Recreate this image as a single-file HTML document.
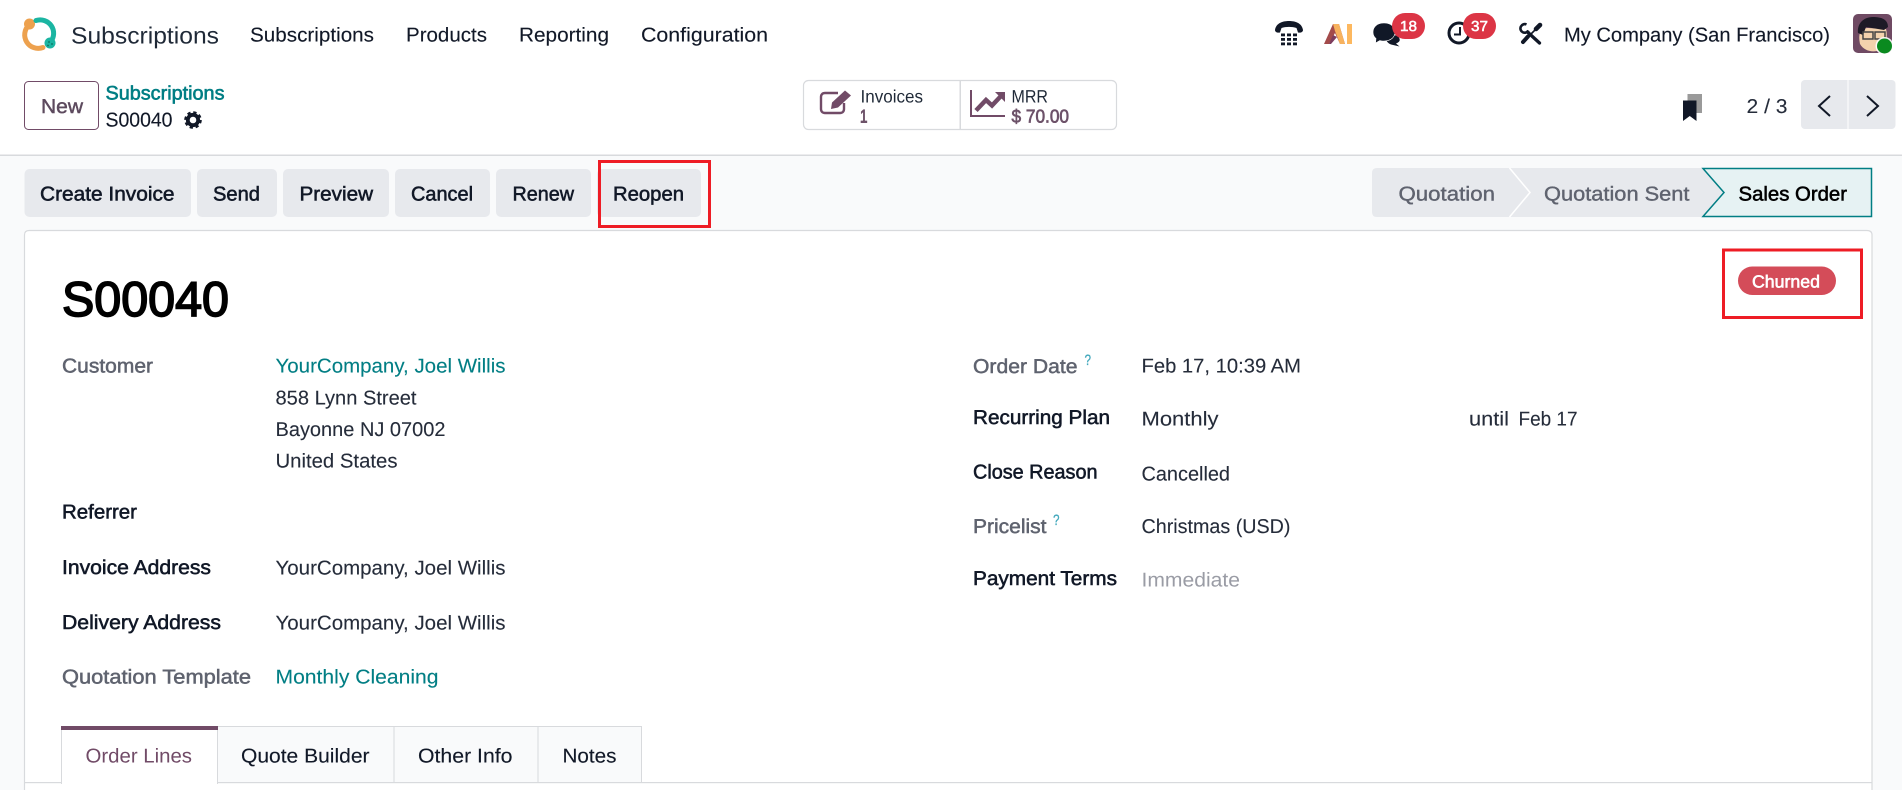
<!DOCTYPE html>
<html lang="en"><head><meta charset="utf-8"><title>S00040 - Subscriptions</title>
<style>
html,body{margin:0;padding:0;width:1902px;height:790px;overflow:hidden;background:#fff}
svg{display:block}
text{font-family:"Liberation Sans",sans-serif;font-size:20px;fill:#1f2937;text-rendering:geometricPrecision}
.d{fill:#111827;stroke:#111827;stroke-width:.12}
.m{stroke:#111827;stroke-width:.55;fill:#111827}
.g{fill:#5f636f;stroke:#5f636f;stroke-width:.5}
.v{fill:#252c3a;stroke:#252c3a;stroke-width:.1}
.l{fill:#017e84;stroke:#017e84;stroke-width:.1}
.p{fill:#714b67}
.q{fill:#45a9bd;font-size:15px;stroke:#45a9bd;stroke-width:.3}
.b{fill:#e7e9ed}
</style></head><body>
<svg width="1902" height="790" viewBox="0 0 1902 790" xmlns="http://www.w3.org/2000/svg">
<rect x="0" y="0" width="1902" height="790" fill="#fff"/>
<rect x="0" y="155" width="1902" height="635" fill="#f9fafb"/>
<rect x="0" y="154.5" width="1902" height="1.5" fill="#d8dadd"/>

<!-- brand -->
<path d="M29 25A13.500 13.500 0 0 0 43 47.500" fill="none" stroke="#eda14e" stroke-width="5" stroke-linecap="round"/>
<circle cx="29.500" cy="24" r="5.500" fill="#eda14e"/>
<path d="M36 20.500A13.500 13.500 0 0 1 50.500 42" fill="none" stroke="#1bb5a2" stroke-width="5" stroke-linecap="round"/>
<circle cx="50" cy="43" r="5.500" fill="#1bb5a2"/>
<circle cx="49" cy="42" r=".9" fill="#0a6f60"/><circle cx="52" cy="44" r=".9" fill="#0a6f60"/><circle cx="48" cy="45.500" r=".9" fill="#0a6f60"/>
<text x="71" y="43.500" style="font-size:23.500px;fill:#1f2937" textLength="148" lengthAdjust="spacingAndGlyphs">Subscriptions</text>
<text class="d" x="250" y="41.500" textLength="124" lengthAdjust="spacingAndGlyphs">Subscriptions</text>
<text class="d" x="406" y="41.500" textLength="81" lengthAdjust="spacingAndGlyphs">Products</text>
<text class="d" x="519" y="41.500" textLength="90" lengthAdjust="spacingAndGlyphs">Reporting</text>
<text class="d" x="641" y="41.500" textLength="127" lengthAdjust="spacingAndGlyphs">Configuration</text>

<!-- systray -->
<g fill="#111827">
<path d="M1275 30C1276 23 1283 21 1289 21C1295 21 1302 23 1303 30C1303 32 1301 33 1298 32.500L1296.500 28C1292 26.500 1286 26.500 1281.500 28L1280 32.500C1277 33 1275 32 1275 30Z"/>
<rect x="1281" y="33.500" width="4" height="2.800"/><rect x="1287" y="33.500" width="4" height="2.800"/><rect x="1293" y="33.500" width="4" height="2.800"/>
<rect x="1281" y="38" width="4" height="2.800"/><rect x="1287" y="38" width="4" height="2.800"/><rect x="1293" y="38" width="4" height="2.800"/>
<rect x="1281" y="42.500" width="4" height="2.800"/><rect x="1287" y="42.500" width="4" height="2.800"/><rect x="1293" y="42.500" width="4" height="2.800"/>
</g>
<path d="M1324 44L1333 24H1339L1345 44H1340L1335 33L1329 44Z" fill="#a34b4b"/>
<path d="M1333 24H1339L1345 44H1340L1335 31Z" fill="#f7b25e"/>
<path d="M1329 44L1333 35L1337 37L1331 44Z" fill="#7d3d5e"/>
<rect x="1347" y="24" width="5" height="20" fill="#fdb85f"/>
<path d="M1386 33L1398 36C1401 40 1400 42 1396 43.500L1399.500 46.500L1391 44.500C1387 43 1386 40 1386 38Z" fill="#111827"/>
<path d="M1384 23C1391 23 1395 27 1395 32C1395 37 1391 41 1384 41C1382 41 1381 41 1380 40.500L1375.500 43L1376 38.500C1374 37 1373 34.500 1373 32C1373 27 1377 23 1384 23Z" fill="#111827" stroke="#fff" stroke-width=".6"/>
<rect x="1392" y="13" width="33" height="26" rx="13" fill="#dc3545"/>
<text x="1400" y="31" textLength="17" lengthAdjust="spacingAndGlyphs" style="font-size:14.500px;fill:#fff;stroke:#fff;stroke-width:.5">18</text>
<circle cx="1459" cy="33" r="10" fill="none" stroke="#111827" stroke-width="3"/>
<path d="M1460 27V34.500H1454" fill="none" stroke="#111827" stroke-width="2"/>
<rect x="1463" y="13" width="33" height="26" rx="13" fill="#dc3545"/>
<text x="1471" y="31" textLength="17" lengthAdjust="spacingAndGlyphs" style="font-size:14.500px;fill:#fff;stroke:#fff;stroke-width:.5">37</text>
<!-- tools -->
<g fill="none" stroke="#111827" stroke-linecap="round">
<path d="M1526.500 24.500A4.300 4.300 0 1 0 1528.500 30.500" stroke-width="2.600" stroke-linecap="butt"/>
<path d="M1527.500 32L1539.500 43" stroke-width="3.300"/>
<path d="M1540 25L1536 29" stroke-width="4.600"/>
<path d="M1535 30L1531.500 33.500" stroke-width="1.600"/>
<path d="M1528 36.500L1523 42" stroke-width="4"/>
</g>
<text class="d" x="1564" y="41.500" textLength="266" lengthAdjust="spacingAndGlyphs">My Company (San Francisco)</text>
<!-- avatar -->
<rect x="1853" y="14" width="39" height="39" rx="5" fill="#6f4a63"/>
<path d="M1860 44C1858 34 1860 28 1868 28L1886 29C1888 36 1886 46 1880 50C1873 53 1864 51 1860 44Z" fill="#f3d2ad"/>
<path d="M1858 33C1857 24 1863 17 1873 17C1881 17 1888 19 1888 27L1884 30L1866 27L1863 35Z" fill="#1d1a26"/>
<rect x="1863" y="32" width="10" height="7" fill="none" stroke="#444" stroke-width="1.500"/>
<rect x="1875" y="32" width="10" height="7" fill="none" stroke="#444" stroke-width="1.500"/>
<circle cx="1884.500" cy="46" r="9" fill="#fff" opacity=".9"/>
<circle cx="1884.500" cy="46" r="7.500" fill="#0a8a1f"/>

<!-- control row -->
<rect x="24.500" y="81.500" width="74" height="48" rx="4" fill="#fff" stroke="#714b67"/>
<text x="41" y="113" textLength="42" lengthAdjust="spacingAndGlyphs" style="fill:#5d4a5e;stroke:#5d4a5e;stroke-width:.45">New</text>
<text x="105.500" y="99.500" textLength="119" lengthAdjust="spacingAndGlyphs" style="fill:#017e84;stroke:#017e84;stroke-width:.6;font-size:19.500px">Subscriptions</text>
<text class="d" x="105.500" y="126.500" textLength="67" lengthAdjust="spacingAndGlyphs">S00040</text>
<g transform="translate(193 120)"><circle r="5.200" fill="none" stroke="#111827" stroke-width="3.800"/><circle r="7.700" fill="none" stroke="#111827" stroke-width="2.200" stroke-dasharray="3.300 2.750"/></g>

<!-- stat buttons -->
<rect x="803.500" y="80.500" width="313" height="49" rx="5" fill="#fff" stroke="#d8dadd" stroke-width="1.200"/>
<rect x="959.500" y="81" width="1.500" height="48" fill="#d8dadd"/>
<path d="M838 93H825C822.500 93 821 94.500 821 97V109C821 111.500 822.500 113 825 113H840C842.500 113 844 111.500 844 109V103" fill="none" stroke="#714b67" stroke-width="2.400"/>
<path d="M832 102.500L845 90.500L851 95.500L838 107.500L831 109Z" fill="#714b67"/>
<text x="860.500" y="102.500" style="font-size:18px;fill:#1f2937" textLength="62.500" lengthAdjust="spacingAndGlyphs">Invoices</text>
<text x="860" y="122.500" style="font-size:18.500px;fill:#6d5269;stroke:#6d5269;stroke-width:.9" textLength="7.500" lengthAdjust="spacingAndGlyphs">1</text>
<path d="M971 90V116H1005" fill="none" stroke="#714b67" stroke-width="2"/>
<path d="M976 110.500L986 100L992 105.500L1001 96" fill="none" stroke="#714b67" stroke-width="4.500"/>
<path d="M995 92H1005V102Z" fill="#714b67"/>
<text x="1011.500" y="102.500" style="font-size:18px;fill:#1f2937" textLength="36.500" lengthAdjust="spacingAndGlyphs">MRR</text>
<text x="1011.500" y="122.500" style="font-size:18.500px;fill:#6d5269;stroke:#6d5269;stroke-width:.7" textLength="57.500" lengthAdjust="spacingAndGlyphs">$ 70.00</text>

<!-- bookmark + pager -->
<rect x="1687.500" y="94" width="14.500" height="19" fill="#9a9a9a"/>
<path d="M1683 100.500H1696.500V121L1689.750 116L1683 121Z" fill="#111827"/>
<text class="v" x="1746.500" y="113" textLength="41" lengthAdjust="spacingAndGlyphs">2 / 3</text>
<rect x="1801" y="80" width="94.500" height="49" rx="4" class="b"/>
<rect x="1847.500" y="80" width="1" height="49" fill="#fff"/>
<path d="M1830 96L1819 106L1830 116" fill="none" stroke="#111827" stroke-width="2"/>
<path d="M1867 96L1878 106L1867 116" fill="none" stroke="#111827" stroke-width="2"/>

<!-- action buttons -->
<rect x="24.500" y="169" width="166.500" height="48" rx="5" class="b"/>
<rect x="197" y="169" width="80" height="48" rx="5" class="b"/>
<rect x="283" y="169" width="106" height="48" rx="5" class="b"/>
<rect x="395" y="169" width="95" height="48" rx="5" class="b"/>
<rect x="496" y="169" width="95" height="48" rx="5" class="b"/>
<rect x="597" y="169" width="104" height="48" rx="5" class="b"/>
<text class="m" x="40" y="200.500" textLength="134.500" lengthAdjust="spacingAndGlyphs">Create Invoice</text>
<text class="m" x="213" y="200.500" textLength="47" lengthAdjust="spacingAndGlyphs">Send</text>
<text class="m" x="299.500" y="200.500" textLength="73.500" lengthAdjust="spacingAndGlyphs">Preview</text>
<text class="m" x="411" y="200.500" textLength="62" lengthAdjust="spacingAndGlyphs">Cancel</text>
<text class="m" x="512.500" y="200.500" textLength="61.500" lengthAdjust="spacingAndGlyphs">Renew</text>
<text class="m" x="613" y="200.500" textLength="71" lengthAdjust="spacingAndGlyphs">Reopen</text>
<rect x="599.500" y="161.500" width="110" height="65" fill="none" stroke="#ee1c25" stroke-width="3"/>

<!-- statusbar -->
<path d="M1377 168H1510L1530.500 192.500L1510 217H1377Q1372 217 1372 212V173Q1372 168 1377 168Z" class="b"/>
<path d="M1510 168H1703L1724 192.500L1703 217H1510L1530.500 192.500Z" class="b"/>
<path d="M1509.500 168L1530 192.500L1509.500 217" fill="none" stroke="#fff" stroke-width="1.500"/>
<path d="M1703 168.500H1871.500V216.500H1703L1724 192.500Z" fill="#e6f2f3" stroke="#017e84" stroke-width="1.500"/>
<text class="g" x="1398.500" y="200.500" textLength="96.500" lengthAdjust="spacingAndGlyphs" style="stroke-width:.4">Quotation</text>
<text class="g" x="1544" y="200.500" textLength="145.500" lengthAdjust="spacingAndGlyphs" style="stroke-width:.4">Quotation Sent</text>
<text x="1738.500" y="200.500" textLength="108.500" lengthAdjust="spacingAndGlyphs" style="fill:#000;stroke:#000;stroke-width:.55">Sales Order</text>

<!-- sheet -->
<path d="M24.500 800V235Q24.500 230.500 29 230.500H1867Q1872 230.500 1872 235V800Z" fill="#fff" stroke="#d8dadd" stroke-width="1.200"/>
<text x="62" y="316" style="font-size:49px;fill:#000;stroke:#000;stroke-width:1.700" textLength="167" lengthAdjust="spacingAndGlyphs">S00040</text>
<rect x="1738" y="266.500" width="98" height="28.500" rx="14.250" fill="#d44c59"/>
<text x="1752" y="287.500" style="font-size:17.500px;fill:#fff;stroke:#fff;stroke-width:.6" textLength="68" lengthAdjust="spacingAndGlyphs">Churned</text>
<rect x="1723.500" y="250" width="138" height="67.500" fill="none" stroke="#ee1c25" stroke-width="3"/>

<!-- left group -->
<text class="g" x="62" y="372.500" textLength="91" lengthAdjust="spacingAndGlyphs">Customer</text>
<text class="l" x="275.500" y="372.500" textLength="230" lengthAdjust="spacingAndGlyphs">YourCompany, Joel Willis</text>
<text class="v" x="275.500" y="404.500" textLength="141" lengthAdjust="spacingAndGlyphs">858 Lynn Street</text>
<text class="v" x="275.500" y="436" textLength="170" lengthAdjust="spacingAndGlyphs">Bayonne NJ 07002</text>
<text class="v" x="275.500" y="467.500" textLength="122" lengthAdjust="spacingAndGlyphs">United States</text>
<text class="m" x="62" y="518.500" textLength="75" lengthAdjust="spacingAndGlyphs">Referrer</text>
<text class="m" x="62" y="574" textLength="149" lengthAdjust="spacingAndGlyphs">Invoice Address</text>
<text class="v" x="275.500" y="574.500" textLength="230" lengthAdjust="spacingAndGlyphs">YourCompany, Joel Willis</text>
<text class="m" x="62" y="629" textLength="159" lengthAdjust="spacingAndGlyphs">Delivery Address</text>
<text class="v" x="275.500" y="629.500" textLength="230" lengthAdjust="spacingAndGlyphs">YourCompany, Joel Willis</text>
<text class="g" x="62" y="683.500" textLength="189" lengthAdjust="spacingAndGlyphs">Quotation Template</text>
<text class="l" x="275.500" y="683.500" textLength="163" lengthAdjust="spacingAndGlyphs">Monthly Cleaning</text>

<!-- right group -->
<text class="g" x="973" y="373" textLength="104.500" lengthAdjust="spacingAndGlyphs">Order Date</text>
<text class="q" x="1084.500" y="365" textLength="6.500" lengthAdjust="spacingAndGlyphs">?</text>
<text class="v" x="1141.500" y="372.500" textLength="159.500" lengthAdjust="spacingAndGlyphs">Feb 17, 10:39 AM</text>
<text class="m" x="973" y="424" textLength="137" lengthAdjust="spacingAndGlyphs">Recurring Plan</text>
<text class="v" x="1141.500" y="425.500" textLength="77" lengthAdjust="spacingAndGlyphs">Monthly</text>
<text class="v" x="1469" y="425.500" textLength="40" lengthAdjust="spacingAndGlyphs">until</text>
<text class="v" x="1518.500" y="425.500" textLength="59" lengthAdjust="spacingAndGlyphs">Feb 17</text>
<text class="m" x="973" y="478.500" textLength="124.500" lengthAdjust="spacingAndGlyphs">Close Reason</text>
<text class="v" x="1141.500" y="480.500" textLength="88.500" lengthAdjust="spacingAndGlyphs">Cancelled</text>
<text class="g" x="973" y="533" textLength="73.500" lengthAdjust="spacingAndGlyphs">Pricelist</text>
<text class="q" x="1053" y="525" textLength="6.500" lengthAdjust="spacingAndGlyphs">?</text>
<text class="v" x="1141.500" y="533" textLength="149" lengthAdjust="spacingAndGlyphs">Christmas (USD)</text>
<text class="m" x="973" y="585" textLength="144" lengthAdjust="spacingAndGlyphs">Payment Terms</text>
<text x="1141.500" y="586.500" style="fill:#9a9ca5" textLength="98.500" lengthAdjust="spacingAndGlyphs">Immediate</text>

<!-- tabs -->
<rect x="24.500" y="782" width="1847.500" height="1.200" fill="#d8dadd"/>
<rect x="217.500" y="726.500" width="424" height="56" fill="#f9fafb" stroke="#d8dadd"/>
<rect x="393.500" y="726.500" width="1" height="56" fill="#d8dadd"/>
<rect x="537.500" y="726.500" width="1" height="56" fill="#d8dadd"/>
<rect x="61" y="726" width="156.500" height="58" fill="#fff"/>
<rect x="61" y="730" width="1" height="54" fill="#d8dadd"/>
<rect x="217" y="730" width="1" height="54" fill="#d8dadd"/>
<rect x="61" y="726" width="157" height="4" fill="#714b67"/>
<text class="p" x="85.500" y="762.500" textLength="106.500" lengthAdjust="spacingAndGlyphs">Order Lines</text>
<text class="d" x="241" y="762.500" textLength="128.500" lengthAdjust="spacingAndGlyphs">Quote Builder</text>
<text class="d" x="418" y="762.500" textLength="94.500" lengthAdjust="spacingAndGlyphs">Other Info</text>
<text class="d" x="562.500" y="762.500" textLength="54" lengthAdjust="spacingAndGlyphs">Notes</text>
</svg>
</body></html>
